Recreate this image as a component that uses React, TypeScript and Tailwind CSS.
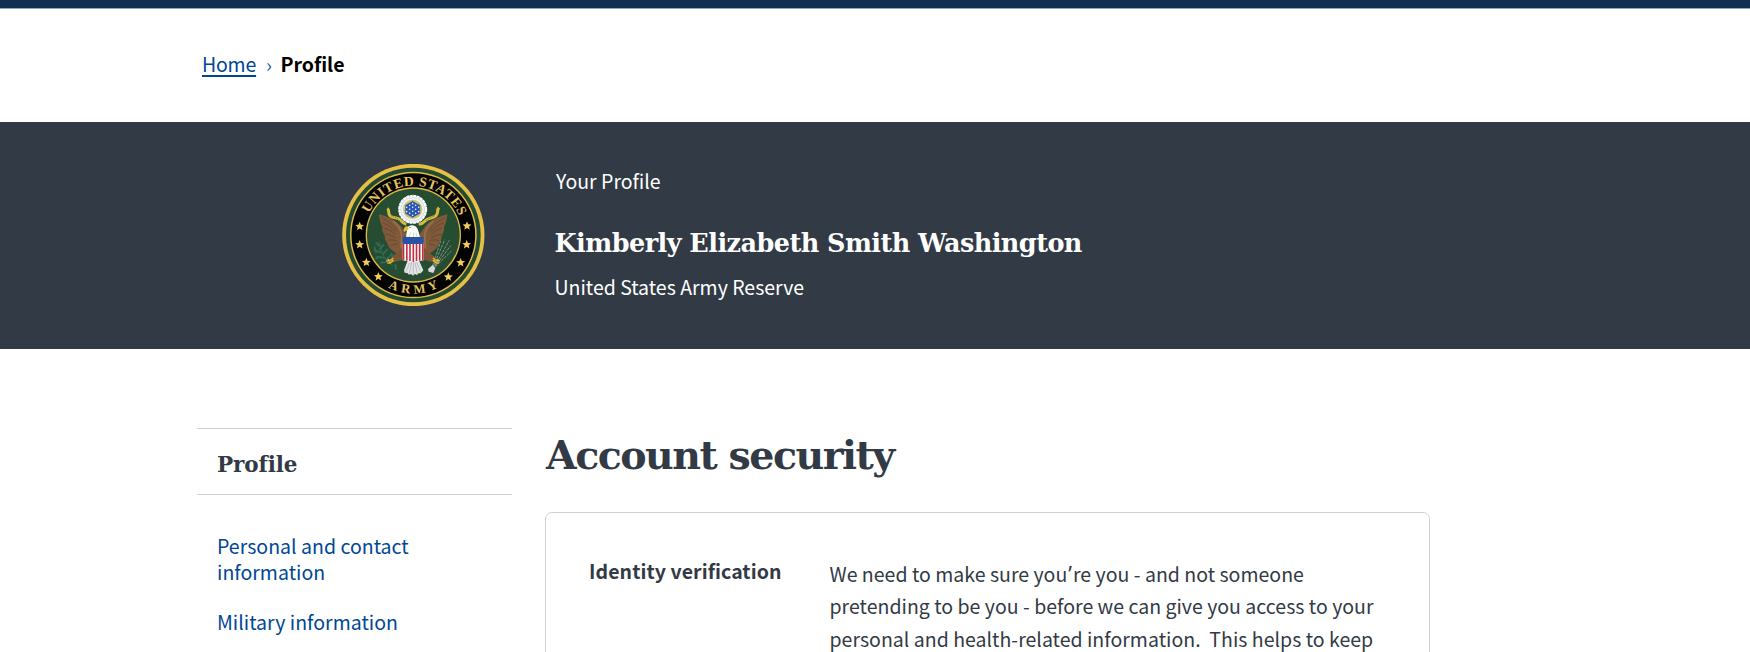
const STAR_POINTS = [
  [89, 214], [89, 269], [109, 322], [145, 365],
  [411, 213], [410, 269], [392, 323], [355, 366],
];

function star(cx: number, cy: number, r: number) {
  return Array.from({ length: 10 }, (_, i) => {
    const a = (i * Math.PI) / 5 - Math.PI / 2;
    const d = i % 2 ? r * 0.45 : r;
    return `${(cx + d * Math.cos(a)).toFixed(1)},${(cy + d * Math.sin(a)).toFixed(1)}`;
  }).join(" ");
}

function Wing() {
  return (
    <g>
      <path
        d="M147 178c14 4 28 8 42 16 18 10 26 22 34 34l16 20-6 46c-20 6-36 4-47-9-8-4-12-12-14-20-6-7-8-15-8-24-6-8-8-16-7-25-5-9-9-21-10-38z"
        fill="#805a3a"
      />
      <path
        d="M154 188c18 10 34 18 46 38M158 204c14 4 26 12 38 26M163 220c12 2 22 8 32 18M166 238c10 0 20 4 30 10M172 256c10-2 20-2 28 2M182 272c8-4 16-4 22-6"
        fill="none"
        stroke="#5e412a"
        strokeWidth="2"
      />
      <path d="M188 198c16 10 25 26 27 44l-2 38" fill="none" stroke="#9a7049" strokeWidth="5" />
      <path d="M220 278l-38 30 8 14 38-10z" fill="#7a5536" />
      <path
        d="M190 309c-6 6-12 10-21 8M190 315c-4 6-10 10-18 9M174 312l8 14"
        fill="none"
        stroke="#e3b53c"
        strokeWidth="4.5"
      />
    </g>
  );
}

function ArmyEmblem() {
  return (
    <svg viewBox="36 27 429 426" className="h-[142px] w-[143px] shrink-0" aria-label="United States Army">
      <circle cx="250" cy="240" r="213.5" fill="#e6bf45" />
      <circle cx="250" cy="240" r="202" fill="#234b31" />
      <circle cx="250" cy="240" r="190" fill="#e0bb44" />
      <circle cx="250" cy="240" r="185.5" fill="#020202" />
      <circle cx="250" cy="240" r="143" fill="#e0bb44" />
      <circle cx="250" cy="240" r="139" fill="#264d32" />

      <path id="arc-top" d="M102 240A148 148 0 0 1 398 240" fill="none" />
      <path id="arc-bottom" d="M75 240A175 175 0 0 0 425 240" fill="none" />
      <text fill="#e6c45c" fontFamily='"Liberation Serif", serif' fontWeight="700" fontSize="41" textAnchor="middle">
        <textPath href="#arc-top" startOffset="51%" textLength="340" lengthAdjust="spacing">
          UNITED STATES
        </textPath>
      </text>
      <text fill="#e6c45c" fontFamily='"Liberation Serif", serif' fontWeight="700" fontSize="38" textAnchor="middle">
        <textPath href="#arc-bottom" startOffset="50%" textLength="156" lengthAdjust="spacing">
          ARMY
        </textPath>
      </text>
      {STAR_POINTS.map(([x, y]) => (
        <polygon key={`${x}-${y}`} points={star(x, y, 14)} fill="#f0cd58" />
      ))}

      <g fill="none" stroke="#2e6a58" strokeWidth="2.5">
        <path d="M190 334c-22-14-36-36-42-76" />
        <path
          d="M148 272l-9-8M150 282l10-12M154 292l-20-6M158 298l14-14M164 308l-22-2M170 312l14-12M174 320l-20 3M138 292l-4-14M150 306l-12 4M184 296l4 6M196 330l2 12"
          strokeWidth="6"
          strokeLinecap="round"
        />
      </g>
      <g stroke="#8b9a8d" strokeWidth="2.6" strokeDasharray="9 3">
        <path d="M304 344l28-86M306 344l38-90M308 344l50-88M308 344l54-72M308 344l56-56" />
      </g>
      <path d="M294 342l14-12 8 10-6 14-14-4z" fill="#d6d8d6" />

      <Wing />
      <g transform="translate(499 0) scale(-1 1)">
        <Wing />
      </g>

      <g fill="none" stroke="#d9b93f">
        <path
          d="M172 160c8 6 0 14 8 22 8 9 24 4 32 14 5 6 8 10 17 12M327 158c-8 8 0 15-9 24-8 8-24 6-32 15-6 7-12 10-20 11"
          strokeWidth="9"
        />
        <path d="M182 182c10 4 20 6 28 16M315 182c-10 4-20 8-27 16" stroke="#5d6a2a" strokeWidth="2" strokeDasharray="4 3" />
      </g>

      <circle cx="248" cy="163" r="41" fill="#c9dbea" />
      <circle cx="248" cy="163" r="40" fill="none" stroke="#fdfdfd" strokeWidth="7" strokeDasharray="9 1.5" />
      <circle cx="248" cy="163" r="34" fill="#eef3f7" />
      <circle cx="248" cy="163" r="29" fill="#d7c564" />
      <path d="M248 137l23 13v26l-23 13-23-13v-26z" fill="#2a55b5" stroke="#d7c564" strokeWidth="2" />
      <g fill="#eef3fb">
        {[
          [248, 146], [239, 151], [257, 151], [230, 157], [248, 157], [266, 157], [239, 163],
          [257, 163], [230, 170], [248, 169], [266, 170], [239, 175], [257, 175], [248, 181],
        ].map(([x, y]) => (
          <circle key={`${x}-${y}`} cx={x} cy={y} r="2.4" />
        ))}
      </g>

      <path d="M229 246c-1-11 2-14 1-24 3-13 24-16 31-3 5 8 6 18 9 27z" fill="#fbfbf8" />
      <path d="M233 214c-9-1-14 6-11 17 5-2 9-5 14-8z" fill="#e2b83c" />
      <circle cx="240" cy="217" r="1.8" fill="#3c3c30" />
      <path d="M237 246l5-14M250 246l1-14M261 246l-3-12" stroke="#bdc5c4" strokeWidth="2" />

      <path d="M234 314h32l14 32-8 9-6 0-5 5-6-3-6 5-6-5-6 2-5-5-8-1-2-7z" fill="#e4e5e6" />
      <path d="M240 322l-12 28M245 322l-7 34M250 322v38M255 322l7 34M260 322l12 28" stroke="#9ba3a6" strokeWidth="1.8" />

      <path d="M218 262h63v54c-10 3-22 2-31 6-10-4-22-3-32-6z" fill="#fafafa" />
      <path
        d="M220.5 266v50M230.5 266v51M240 266v52M250 266v55M259.5 266v52M269 266v51M278.500 266v50"
        stroke="#c32d43"
        strokeWidth="4.8"
      />
      <path d="M218 246h63v21h-63z" fill="#2853a5" />
    </svg>
  );
}

function Breadcrumb() {
  return (
    <nav className="flex h-[113px] items-start pt-[41px] pl-[202px] text-[19.5px] leading-[28px]">
      <a
        href="#home"
        className="w-[54px] tracking-[-0.2px] text-[#004795] underline decoration-2 underline-offset-[3px]"
      >
        Home
      </a>
      <span className="ml-[10px] w-[14.5px] text-[#1f5ea5]">›</span>
      <span className="font-bold text-black">Profile</span>
    </nav>
  );
}

function ProfileHeader() {
  return (
    <header className="flex h-[227px] items-start bg-[#323a45] pl-[342px] text-white">
      <div className="pt-[42px]">
        <ArmyEmblem />
      </div>
      <div className="pt-[45px] pl-[69.5px] text-[19.5px] leading-[28px]">
        <p className="pl-[1.5px]">Your Profile</p>
        <h2 className="mt-[30px] font-['DejaVu_Serif',serif] text-[25.5px] leading-[36px] font-bold tracking-[-0.54px] whitespace-nowrap">
          Kimberly Elizabeth Smith Washington
        </h2>
        <p className="mt-[12px]">United States Army Reserve</p>
      </div>
    </header>
  );
}

function Sidebar() {
  return (
    <aside className="w-[315px] shrink-0 pt-[79px]">
      <h3 className="h-[67px] border-y-[1.5px] border-[#d0d1d3] pt-[21px] pl-[20px] font-['DejaVu_Serif',serif] text-[21.5px] leading-[30px] font-bold tracking-[-0.1px]">
        Profile
      </h3>
      <ul className="flex flex-col gap-[24px] pt-[38px] pl-[20px] text-[19.5px] leading-[26px] tracking-[0.02px] text-[#004795]">
        <li>
          <a href="#contact">
            Personal and contact
            <br />
            information
          </a>
        </li>
        <li>
          <a href="#military">Military information</a>
        </li>
      </ul>
    </aside>
  );
}

function AccountSecurity() {
  return (
    <main className="ml-[33px] w-[885px] pt-[79px]">
      <h1 className="h-[84px] pt-px pl-px font-['DejaVu_Serif',serif] text-[39.5px] leading-[52px] font-bold tracking-[-1.5px]">
        Account security
      </h1>
      <section className="flex h-[300px] items-start rounded-[7px] border-[1.5px] border-[#d0d1d3] pl-[43px] text-[19.5px]">
        <h4 className="w-[240.5px] pt-[44px] leading-[28px] font-bold tracking-[0.08px]">Identity verification</h4>
        <p className="pt-[45px] leading-[32.3px] tracking-[0.02px] whitespace-pre">
          We need to make sure you
          <span className="px-px font-['Noto_Sans'] text-[21px] leading-none">’</span>re you - and not someone
          <br />
          pretending to be you - before we can give you access to your
          <br />
          {"personal and health-related information.  This helps to keep"}
        </p>
      </section>
    </main>
  );
}

export default function App() {
  return (
    <div className="h-[652px] overflow-hidden bg-white font-['Noto_Sans_CJK_SC','Noto_Sans',sans-serif] text-[#323a45]">
      <div className="h-[9px] border-b border-[#93a3b8] bg-[#112e51]" />
      <Breadcrumb />
      <ProfileHeader />
      <div className="flex pl-[197px]">
        <Sidebar />
        <AccountSecurity />
      </div>
    </div>
  );
}
